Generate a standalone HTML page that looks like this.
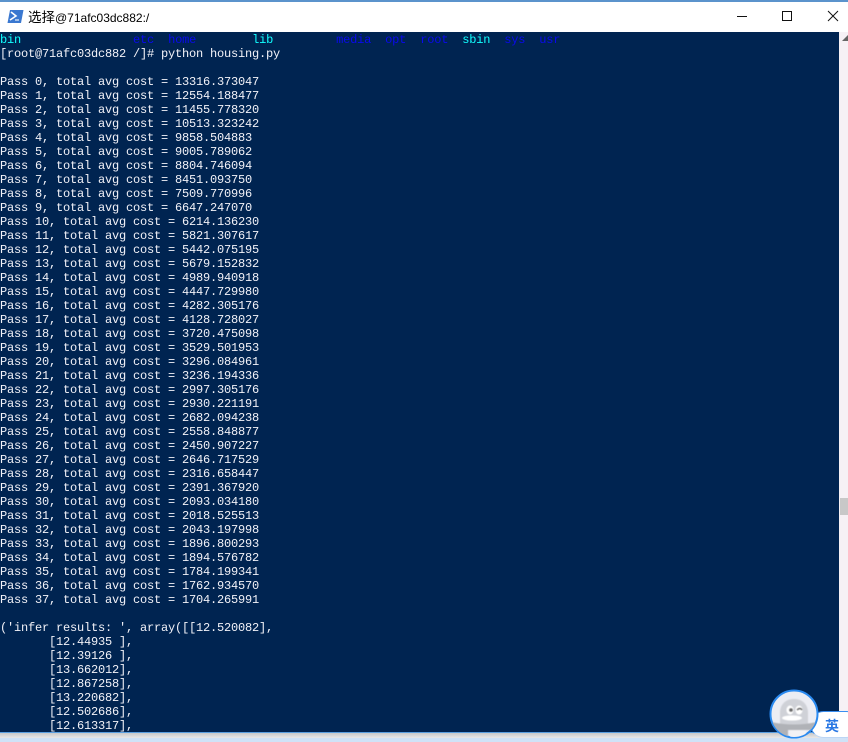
<!DOCTYPE html>
<html><head><meta charset="utf-8"><style>
html,body{margin:0;padding:0;width:848px;height:742px;overflow:hidden;background:#fff}
#top{position:absolute;left:0;top:0;width:848px;height:2px;background:#5b93cc}
#title{position:absolute;left:28px;top:9px;font:12px/17px "Liberation Sans","Noto Sans CJK SC",sans-serif;color:#000;white-space:nowrap}
#title span{font-size:13.5px}
#term{position:absolute;left:0;top:32px;width:839px;height:700px;background:#002451;overflow:hidden}
pre{position:absolute;left:0;top:1px;margin:0;font:12px/14px "Liberation Mono",monospace;letter-spacing:-.2px;color:#f2f2f8;white-space:pre}
.c{color:#1ff}.b{color:#0a0aee}
#sb{position:absolute;left:839px;top:32px;width:9px;height:700px;background:#f6f1f5}
#th{position:absolute;left:840px;top:498px;width:8px;height:17px;background:#c8c8c8}
#bot{position:absolute;left:0;top:732px;width:848px;height:10px;background:#cfe2f7}
#bot2{position:absolute;left:0;top:732px;width:848px;height:6px;background:linear-gradient(#c9c9c9,#e8e8e8);border-top:1px solid #5a9fe0;box-sizing:border-box}
#ime{position:absolute;left:810px;top:711px;width:50px;height:27px;background:#fff;border:1px solid #3a8ef0;border-bottom-color:#bcd6f5;border-radius:14px;box-sizing:border-box;font:bold 14px/28px "Noto Sans CJK SC",sans-serif;color:#2a78e4;padding-left:14px}
</style></head><body>
<div id="top"></div>
<svg style="position:absolute;left:7px;top:9px" width="17" height="15" viewBox="0 0 17 15"><path d="M3 1H16.5L14 14H0.5Z" fill="#3a78d0"/><path d="M4 3L9 7L3 11" fill="none" stroke="#fff" stroke-width="1.6"/><path d="M8 11H12" stroke="#cfe0f5" stroke-width="1.4"/></svg>
<div id="title"><span>选择</span>@71afc03dc882:/</div>
<svg style="position:absolute;left:730px;top:0" width="118" height="32" viewBox="0 0 118 32" fill="none" stroke="#111" stroke-width="1"><path d="M7 16.5H17"/><rect x="52.5" y="11.5" width="9" height="9"/><path d="M98 11L108 21M108 11L98 21"/></svg>
<div id="term"><pre><span class="c">bin</span>                <span class="b">etc</span>  <span class="b">home</span>        <span class="c">lib</span>         <span class="b">media</span>  <span class="b">opt</span>  <span class="b">root</span>  <span class="c">sbin</span>  <span class="b">sys</span>  <span class="b">usr</span>
[root@71afc03dc882 /]# python housing.py

Pass 0, total avg cost = 13316.373047
Pass 1, total avg cost = 12554.188477
Pass 2, total avg cost = 11455.778320
Pass 3, total avg cost = 10513.323242
Pass 4, total avg cost = 9858.504883
Pass 5, total avg cost = 9005.789062
Pass 6, total avg cost = 8804.746094
Pass 7, total avg cost = 8451.093750
Pass 8, total avg cost = 7509.770996
Pass 9, total avg cost = 6647.247070
Pass 10, total avg cost = 6214.136230
Pass 11, total avg cost = 5821.307617
Pass 12, total avg cost = 5442.075195
Pass 13, total avg cost = 5679.152832
Pass 14, total avg cost = 4989.940918
Pass 15, total avg cost = 4447.729980
Pass 16, total avg cost = 4282.305176
Pass 17, total avg cost = 4128.728027
Pass 18, total avg cost = 3720.475098
Pass 19, total avg cost = 3529.501953
Pass 20, total avg cost = 3296.084961
Pass 21, total avg cost = 3236.194336
Pass 22, total avg cost = 2997.305176
Pass 23, total avg cost = 2930.221191
Pass 24, total avg cost = 2682.094238
Pass 25, total avg cost = 2558.848877
Pass 26, total avg cost = 2450.907227
Pass 27, total avg cost = 2646.717529
Pass 28, total avg cost = 2316.658447
Pass 29, total avg cost = 2391.367920
Pass 30, total avg cost = 2093.034180
Pass 31, total avg cost = 2018.525513
Pass 32, total avg cost = 2043.197998
Pass 33, total avg cost = 1896.800293
Pass 34, total avg cost = 1894.576782
Pass 35, total avg cost = 1784.199341
Pass 36, total avg cost = 1762.934570
Pass 37, total avg cost = 1704.265991

('infer results: ', array([[12.520082],
       [12.44935 ],
       [12.39126 ],
       [13.662012],
       [12.867258],
       [13.220682],
       [12.502686],
       [12.613317],</pre></div>
<div id="sb"></div><div id="th"></div>
<svg style="position:absolute;left:842px;top:34px" width="6" height="11"><path d="M0 7L6 1V7Z" fill="#666"/></svg>
<div id="bot"></div><div id="bot2"></div>
<div id="ime">英</div>
<svg style="position:absolute;left:769px;top:689px" width="50" height="50" viewBox="0 0 50 50">
<defs><clipPath id="k"><circle cx="25" cy="25" r="23"/></clipPath></defs>
<circle cx="25" cy="25" r="23.5" fill="#ecedf3" stroke="#2a8af0" stroke-width="2"/>
<g clip-path="url(#k)">
<g style="filter:blur(.5px)">
<path d="M11 40V24C11 15 17 10 25 10S39 15 39 24V40Z" fill="#cfd1d7"/>
<path d="M2 33Q25 38 48 33V41H37V50H21V41H19V50H6V41H2Z" fill="#b0b2b7"/>
<rect x="21" y="41" width="16" height="9" fill="#f2f2f5"/>
<ellipse cx="21" cy="21" rx="3.6" ry="4.5" fill="#fff"/><ellipse cx="30" cy="21" rx="3.6" ry="4.5" fill="#fff"/>
<circle cx="22" cy="21" r="1.8" fill="#666"/><path d="M28 21Q31 18 33 21" stroke="#666" stroke-width="1.4" fill="none"/>
<ellipse cx="23" cy="29" rx="10" ry="2.6" fill="#fff"/>
</g></g></svg>
</body></html>
